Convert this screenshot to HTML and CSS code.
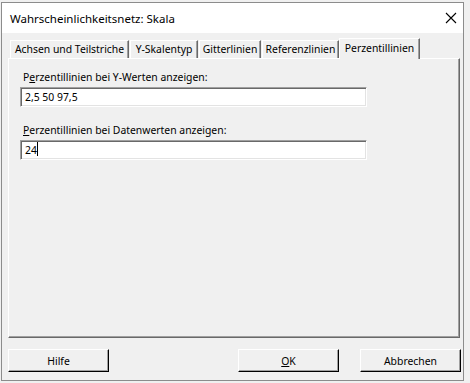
FILE: index.html
```html
<!DOCTYPE html>
<html lang="de">
<head>
    <meta charset="UTF-8">
    <title>Wahrscheinlichkeitsnetz: Skala</title>
    <link rel="stylesheet" href="styles.css">
</head>
<body>
    <div class="window">
        <div class="titlebar">
            <span class="title">Wahrscheinlichkeitsnetz: Skala</span>
            <svg class="close" width="12" height="12" viewBox="0 0 12 12">
                <path d="M1 1 L11 11 M11 1 L1 11" stroke="#000" stroke-width="1.1" fill="none"/>
            </svg>
        </div>
        <div class="client">
            <ul class="tabs">
                <li class="tab t1">Achsen und Teilstriche</li>
                <li class="tab t2">Y-Skalentyp</li>
                <li class="tab t3">Gitterlinien</li>
                <li class="tab t4">Referenzlinien</li>
                <li class="tab t5 active">Perzentillinien</li>
            </ul>
            <div class="panel">
                <div class="field">
                    <label>P<u>e</u>rzentillinien bei Y-Werten anzeigen:</label>
                    <div class="input">2,5 50 97,5</div>
                </div>
                <div class="field">
                    <label><u>P</u>erzentillinien bei Datenwerten anzeigen:</label>
                    <div class="input">24<span class="caret"></span></div>
                </div>
            </div>
            <div class="buttons">
                <button class="btn">Hilfe</button>
                <div class="spacer"></div>
                <button class="btn"><u>O</u>K</button>
                <button class="btn">Abbrechen</button>
            </div>
        </div>
    </div>
</body>
</html>
```

FILE: styles.css
```css
* {
    box-sizing: border-box;
    margin: 0;
    padding: 0;
}
body {
    font-family: 'Noto Sans', 'Open Sans', sans-serif;
    font-size: 10.4px;
    color: #000;
    background-color: #f0f0f0;
    width: 470px;
    height: 383px;
    overflow: hidden;
}
.window {
    margin: 2px 0 0 1px;
    width: 463px;
    height: 379px;
    border: 1px solid #8c8c8c;
    background-color: #f0f0f0;
}
.titlebar {
    height: 30px;
    background-color: #fff;
    display: flex;
    align-items: center;
    justify-content: space-between;
    padding: 0 6px 0 8px;
}
.title {
    font-size: 11.5px;
}
.close {
    display: block;
}
.client {
    padding: 4px 2px 0 6px;
}
.tabs {
    list-style: none;
    display: flex;
    align-items: flex-end;
    height: 21px;
    padding-left: 2px;
}
.tab {
    height: 18px;
    line-height: 16px;
    text-align: center;
    border-top: 1px solid #fff;
    border-left: 1px solid #fff;
    border-right: 1px solid #696969;
    box-shadow: inset -1px 0 #a0a0a0;
    margin-right: 1px;
    white-space: nowrap;
    position: relative;
}
.t1 { width: 119px; }
.t2 { width: 68px; }
.t3 { width: 62px; }
.t4 { width: 77px; }
.tab.active {
    width: 81px;
    height: 21px;
    line-height: 18px;
    margin-left: -1px;
    background-color: #f0f0f0;
    z-index: 1;
    margin-bottom: -1px;
}
.panel {
    height: 280px;
    width: 452px;
    border-top: 1px solid #fff;
    border-left: 1px solid #fff;
    border-right: 1px solid #696969;
    border-bottom: 1px solid #696969;
    box-shadow: inset -1px -1px #a0a0a0;
    padding: 10px 11px;
}
.field {
    margin-bottom: 15px;
}
.field label {
    display: block;
    height: 16px;
    line-height: 16px;
    margin-left: 3px;
    margin-bottom: 2px;
}
.input {
    width: 347px;
    height: 20px;
    background-color: #fff;
    border-top: 1px solid #a0a0a0;
    border-left: 1px solid #a0a0a0;
    border-right: 1px solid #fff;
    border-bottom: 1px solid #fff;
    box-shadow: inset 1px 1px #696969, inset -1px -1px #e3e3e3;
    padding: 0 4px;
    line-height: 18px;
}
.caret {
    display: inline-block;
    width: 1px;
    height: 14px;
    background-color: #000;
    vertical-align: -2px;
}
.buttons {
    display: flex;
    margin-top: 11px;
    gap: 21px;
}
.spacer {
    flex: 1;
}
.btn {
    font: inherit;
    width: 101px;
    height: 23px;
    background-color: #f0f0f0;
    border-top: 1px solid #fff;
    border-left: 1px solid #fff;
    border-right: 1px solid #000;
    border-bottom: 1px solid #000;
    box-shadow: inset -1px -1px #a0a0a0;
}
```
